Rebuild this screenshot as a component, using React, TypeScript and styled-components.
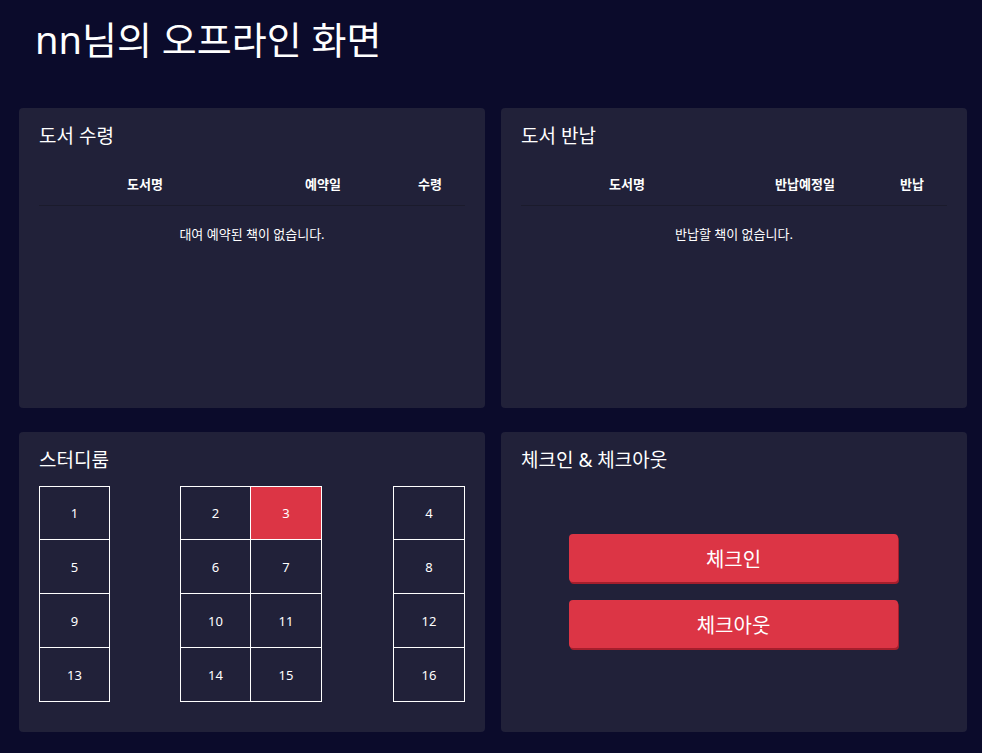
import React from "react";
import styled, { createGlobalStyle } from "styled-components";

const GlobalStyle = createGlobalStyle`
  html, body {
    margin: 0;
    padding: 0;
    background: #0b0b2b;
  }
  body {
    font-family: "Noto Sans", "Noto Sans CJK KR", sans-serif;
    color: #ffffff;
  }
  * { box-sizing: border-box; }
`;

const Page = styled.div`
  min-height: 753px;
  padding: 14px 15px 21px 19px;
`;

const Title = styled.h1`
  margin: 0 0 44px 16px;
  font-size: 38px;
  font-weight: 400;
  line-height: 50px;
  letter-spacing: 0;
`;

const Grid = styled.div`
  display: grid;
  grid-template-columns: 466px 466px;
  grid-auto-rows: 300px;
  column-gap: 16px;
  row-gap: 24px;
`;

const Card = styled.section`
  background: #212139;
  border-radius: 4px;
  padding: 14px 20px;
  display: flex;
  flex-direction: column;
`;

const CardTitle = styled.h2`
  margin: 0;
  font-size: 19px;
  font-weight: 400;
  line-height: 28px;
`;

const Table = styled.div`
  margin-top: 12px;
  display: grid;
  grid-template-columns: 212px 144px 70px;
`;

const HeadCell = styled.div`
  height: 44px;
  display: flex;
  align-items: center;
  justify-content: center;
  font-size: 13px;
  font-weight: 700;
  border-bottom: 1px solid #1b1b2c;
`;

const EmptyRow = styled.div`
  grid-column: 1 / -1;
  text-align: center;
  font-size: 13px;
  line-height: 22px;
  padding-top: 17px;
`;

const Rooms = styled.div`
  margin-top: 12px;
  display: grid;
  grid-template-columns: 71px 70px 71px 71px 71px 72px;
  grid-auto-rows: 54px;
`;

const Room = styled.div<{ $col: number; $row: number; $busy?: boolean }>`
  grid-column: ${(p) => p.$col};
  grid-row: ${(p) => p.$row};
  display: flex;
  align-items: center;
  justify-content: center;
  font-size: 13px;
  background: ${(p) => (p.$busy ? "#dc3545" : "transparent")};
  border-right: 1px solid #ffffff;
  border-bottom: 1px solid #ffffff;
  border-left: ${(p) => (p.$col === 4 ? "none" : "1px solid #ffffff")};
  border-top: ${(p) => (p.$row === 1 ? "1px solid #ffffff" : "none")};
`;

const Buttons = styled.div`
  margin-top: 60px;
  display: flex;
  flex-direction: column;
  align-items: center;
  gap: 18px;
`;

const RedButton = styled.button`
  width: 329px;
  height: 48px;
  margin-left: -1px;
  border: none;
  border-radius: 4px;
  background: #dc3545;
  box-shadow: 1px 2px 0 #a51e2c;
  color: #ffffff;
  font-family: "Noto Sans", "Noto Sans CJK KR", sans-serif;
  font-size: 20px;
  cursor: pointer;
`;

const layout: { n: number; col: number; row: number }[] = [];
const cols = [1, 3, 4, 6];
for (let r = 0; r < 4; r++) {
  cols.forEach((c, i) => layout.push({ n: r * 4 + i + 1, col: c, row: r + 1 }));
}

export default function App() {
  return (
    <>
      <GlobalStyle />
      <Page>
        <Title>nn님의 오프라인 화면</Title>
        <Grid>
          <Card>
            <CardTitle>도서 수령</CardTitle>
            <Table>
              <HeadCell>도서명</HeadCell>
              <HeadCell>예약일</HeadCell>
              <HeadCell>수령</HeadCell>
              <EmptyRow>대여 예약된 책이 없습니다.</EmptyRow>
            </Table>
          </Card>
          <Card>
            <CardTitle>도서 반납</CardTitle>
            <Table>
              <HeadCell>도서명</HeadCell>
              <HeadCell>반납예정일</HeadCell>
              <HeadCell>반납</HeadCell>
              <EmptyRow>반납할 책이 없습니다.</EmptyRow>
            </Table>
          </Card>
          <Card>
            <CardTitle>스터디룸</CardTitle>
            <Rooms>
              {layout.map((r) => (
                <Room key={r.n} $col={r.col} $row={r.row} $busy={r.n === 3}>
                  {r.n}
                </Room>
              ))}
            </Rooms>
          </Card>
          <Card>
            <CardTitle>체크인 &amp; 체크아웃</CardTitle>
            <Buttons>
              <RedButton>체크인</RedButton>
              <RedButton>체크아웃</RedButton>
            </Buttons>
          </Card>
        </Grid>
      </Page>
    </>
  );
}
